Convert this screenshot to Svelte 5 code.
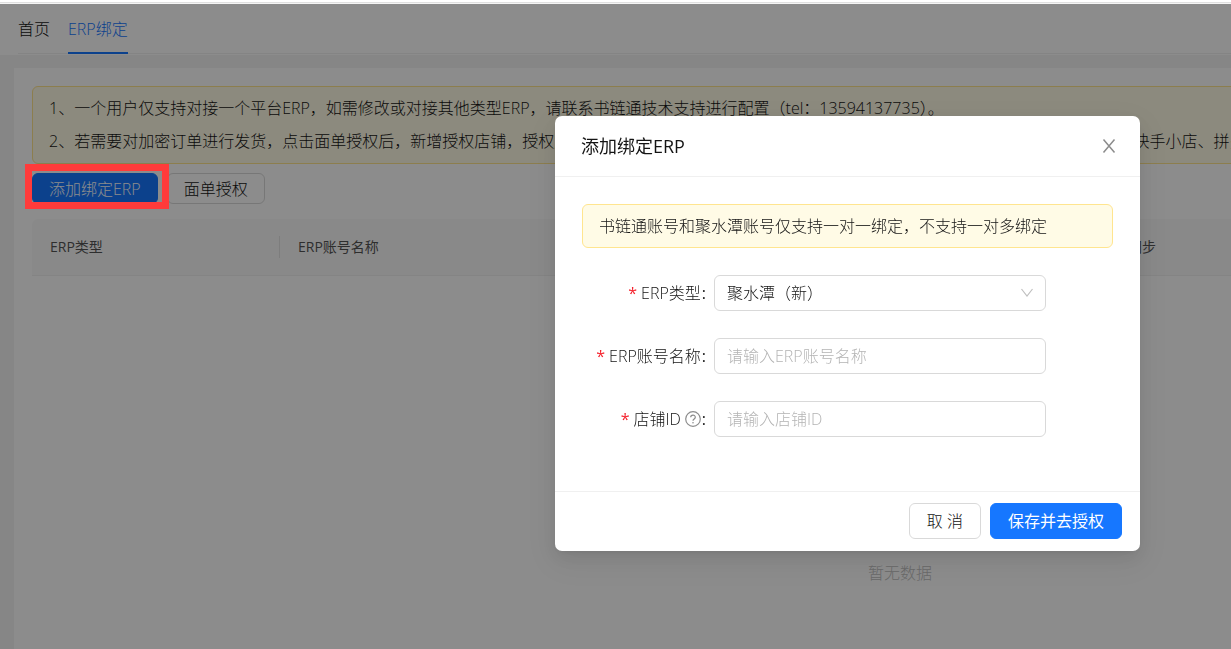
<script>
  let erpType = 'jushuitan';
  let accountName = '';
  let shopId = '';
  let showModal = true;

  const tips = [
    '1、一个用户仅支持对接一个平台ERP，如需修改或对接其他类型ERP，请联系书链通技术支持进行配置（tel：13594137735）。',
    '2、若需要对加密订单进行发货，点击面单授权后，新增授权店铺，授权成功后即可在PC使用电子面单完成发货，目前支持授权平台有淘宝、天猫、抖音、快手小店、拼多多、京东'
  ];

  const columns = ['ERP类型', 'ERP账号名称', '订单信息自动同步', '操作'];

  function openModal() {
    showModal = true;
  }

  function closeModal() {
    showModal = false;
  }
</script>

<div class="page">
  <div class="top-line"></div>

  <nav class="tabs">
    <div class="tab-list">
      <a href="#home">首页</a>
      <a href="#erp" class="active">ERP绑定</a>
    </div>
  </nav>

  <main>
    <div class="card">
      <div class="notice">
        {#each tips as tip}
          <p>{tip}</p>
        {/each}
      </div>

      <div class="toolbar">
        <div class="marked">
          <button class="primary" on:click={openModal}>添加绑定ERP</button>
        </div>
        <button>面单授权</button>
      </div>

      <table>
        <thead>
          <tr>
            {#each columns as column}
              <th><span>{column}</span></th>
            {/each}
          </tr>
        </thead>
        <tbody>
          <tr>
            <td class="empty" colspan={columns.length}>暂无数据</td>
          </tr>
        </tbody>
      </table>
    </div>
  </main>
</div>

{#if showModal}
  <div class="mask">
    <div class="modal" role="dialog" aria-labelledby="modal-title">
      <header>
        <h2 id="modal-title">添加绑定ERP</h2>
        <button class="close" aria-label="关闭" on:click={closeModal}>
          <svg width="16" height="16" viewBox="0 0 16 16">
            <path d="M2.5 1.5L13.5 14.5M13.5 1.5L2.5 14.5" fill="none" stroke="currentColor" stroke-width="1.5" />
          </svg>
        </button>
      </header>

      <div class="modal-body">
        <div class="alert">书链通账号和聚水潭账号仅支持一对一绑定，不支持一对多绑定</div>

        <form id="bind-form" on:submit|preventDefault={closeModal}>
          <div class="row">
            <label for="erp-type"><i>*</i>ERP类型<b>:</b></label>
            <div class="select">
              <select id="erp-type" bind:value={erpType}>
                <option value="jushuitan">聚水潭（新）</option>
              </select>
              <svg width="14" height="14" viewBox="0 0 14 14">
                <path d="M1.5 3L7 10L12.5 3" fill="none" stroke="currentColor" stroke-width="1.2" />
              </svg>
            </div>
          </div>
          <div class="row">
            <label for="account-name"><i>*</i>ERP账号名称<b>:</b></label>
            <input id="account-name" type="text" placeholder="请输入ERP账号名称" bind:value={accountName} />
          </div>
          <div class="row">
            <label for="shop-id">
              <i>*</i>店铺ID
              <svg class="help" width="16" height="16" viewBox="0 0 16 16">
                <circle cx="8" cy="8" r="7.3" fill="none" stroke="currentColor" stroke-width="1.2" />
                <path d="M5.7 6.3C5.7 3.4 10.3 3.4 10.3 6.2C10.3 8 8 7.8 8 9.7" fill="none" stroke="currentColor" stroke-width="1.2" />
                <circle cx="8" cy="11.7" r="0.8" fill="currentColor" />
              </svg><b>:</b>
            </label>
            <input id="shop-id" type="text" placeholder="请输入店铺ID" bind:value={shopId} />
          </div>
        </form>
      </div>

      <footer>
        <button on:click={closeModal}>取 消</button>
        <button class="primary" type="submit" form="bind-form">保存并去授权</button>
      </footer>
    </div>
  </div>
{/if}

<style>
  :global(body) {
    overflow: hidden;
    background: #f5f5f5;
  }

  .page,
  .mask {
    font-family: "Open Sans", "Noto Sans CJK SC", sans-serif;
    font-size: 16px;
    font-weight: 300;
    line-height: 24px;
    color: #141414;
  }

  .page {
    display: flex;
    flex-direction: column;
    height: 100vh;
    overflow: hidden;
  }

  button,
  input,
  select {
    box-sizing: border-box;
    height: 36px;
    border: 1px solid #d9d9d9;
    border-radius: 6px;
    background: white;
    color: #141414;
    font: inherit;
  }

  button {
    padding: 0 16px;
    cursor: pointer;
    white-space: nowrap;
  }

  .primary {
    border-color: #1677ff;
    background: #1677ff;
    color: white;
  }

  .top-line {
    flex: none;
    height: 2px;
    margin-bottom: 1px;
    border-bottom: 1px solid #e0e0e0;
    background: white;
  }

  .tabs {
    flex: none;
    padding: 0 0 1px 18px;
    background: white;
  }

  .tab-list {
    display: flex;
    gap: 18px;
    border-bottom: 1px solid #f0f0f0;
  }

  .tab-list a {
    padding: 13px 0 11px;
    margin-bottom: -1px;
    border-bottom: 2px solid transparent;
    color: #141414;
    text-decoration: none;
  }

  .tab-list .active {
    border-bottom-color: #1677ff;
    color: #1677ff;
  }

  main {
    flex: 1;
    padding: 13px 14px 0;
  }

  /* the list is wider than most windows and runs off to the right */
  .card {
    box-sizing: border-box;
    min-width: 1772px;
    height: 100%;
    padding: 18px;
    background: white;
  }

  .notice {
    padding: 5px 16px;
    border: 1px solid #ffe58f;
    border-radius: 6px;
    background: #fffbe6;
    white-space: nowrap;
    overflow: hidden;
  }

  .notice p {
    margin: 0;
    line-height: 33px;
  }

  .toolbar {
    display: flex;
    gap: 9px;
    margin: 9px 0 15px;
  }

  .toolbar button {
    height: 31px;
  }

  .marked {
    position: relative;
  }

  .marked::after {
    content: "";
    position: absolute;
    z-index: 20;
    inset: -9px -11px -5px -7px;
    border: 7px solid #ff3b3b;
    pointer-events: none;
  }

  table {
    width: 100%;
    table-layout: fixed;
    border-collapse: separate;
    border-spacing: 0;
  }

  th {
    padding: 17px 0;
    border-bottom: 1px solid #f0f0f0;
    background: #fafafa;
    color: #555;
    font-size: 14px;
    font-weight: 400;
    line-height: 22px;
    text-align: left;
  }

  th:first-child {
    width: 248px;
    border-top-left-radius: 6px;
  }

  th:nth-child(2) {
    width: 746px;
  }

  th span {
    display: block;
    padding-left: 18px;
    border-right: 1px solid #e4e4e4;
  }

  .empty {
    height: 594px;
    padding: 0;
    color: #bfbfbf;
    text-align: center;
  }

  .mask {
    position: fixed;
    z-index: 10;
    inset: 4px 0 0;
    display: flex;
    align-items: flex-start;
    justify-content: flex-end;
    padding: 112px 91px 0 18px;
    background: rgba(0, 0, 0, 0.45);
  }

  .modal {
    width: 585px;
    border-radius: 7px;
    background: white;
    box-shadow: 0 7px 18px rgba(0, 0, 0, 0.08), 0 3px 7px -4px rgba(0, 0, 0, 0.12),
      0 10px 32px 9px rgba(0, 0, 0, 0.05);
  }

  header {
    display: flex;
    align-items: center;
    justify-content: space-between;
    padding: 16px 23px 16px 26px;
    border-bottom: 1px solid #f0f0f0;
  }

  h2 {
    margin: 0;
    font-size: 18px;
    font-weight: 400;
    line-height: 28px;
  }

  .close {
    display: flex;
    height: 16px;
    padding: 0;
    border: none;
    color: #8c8c8c;
  }

  .modal-body {
    padding: 27px 27px 54px;
  }

  .alert {
    padding: 9px 16px;
    border: 1px solid #ffe58f;
    border-radius: 6px;
    background: #fffbe6;
  }

  form {
    display: grid;
    gap: 27px;
    margin-top: 27px;
  }

  .row {
    display: grid;
    grid-template-columns: 132fr 332fr 67fr;
    align-items: center;
  }

  label {
    display: flex;
    align-items: center;
    justify-content: flex-end;
    padding-right: 8px;
    white-space: nowrap;
  }

  label i {
    margin-right: 4px;
    color: #f5222d;
    font-style: normal;
    font-weight: 400;
  }

  label b {
    margin-left: 1px;
    font-weight: 400;
  }

  .help {
    margin-left: 4px;
    color: #8c8c8c;
  }

  input,
  select {
    width: 100%;
    padding: 0 12px;
  }

  select {
    appearance: none;
  }

  input::placeholder {
    color: #b4b4b4;
    opacity: 1;
  }

  .select {
    position: relative;
    display: flex;
    align-items: center;
  }

  .select svg {
    position: absolute;
    right: 12px;
    color: #bfbfbf;
    pointer-events: none;
  }

  footer {
    display: flex;
    justify-content: flex-end;
    gap: 9px;
    padding: 11px 18px 12px;
    border-top: 1px solid #f0f0f0;
  }

  footer button {
    padding: 0 17px;
  }

  footer .primary {
    font-weight: 400;
  }
</style>
